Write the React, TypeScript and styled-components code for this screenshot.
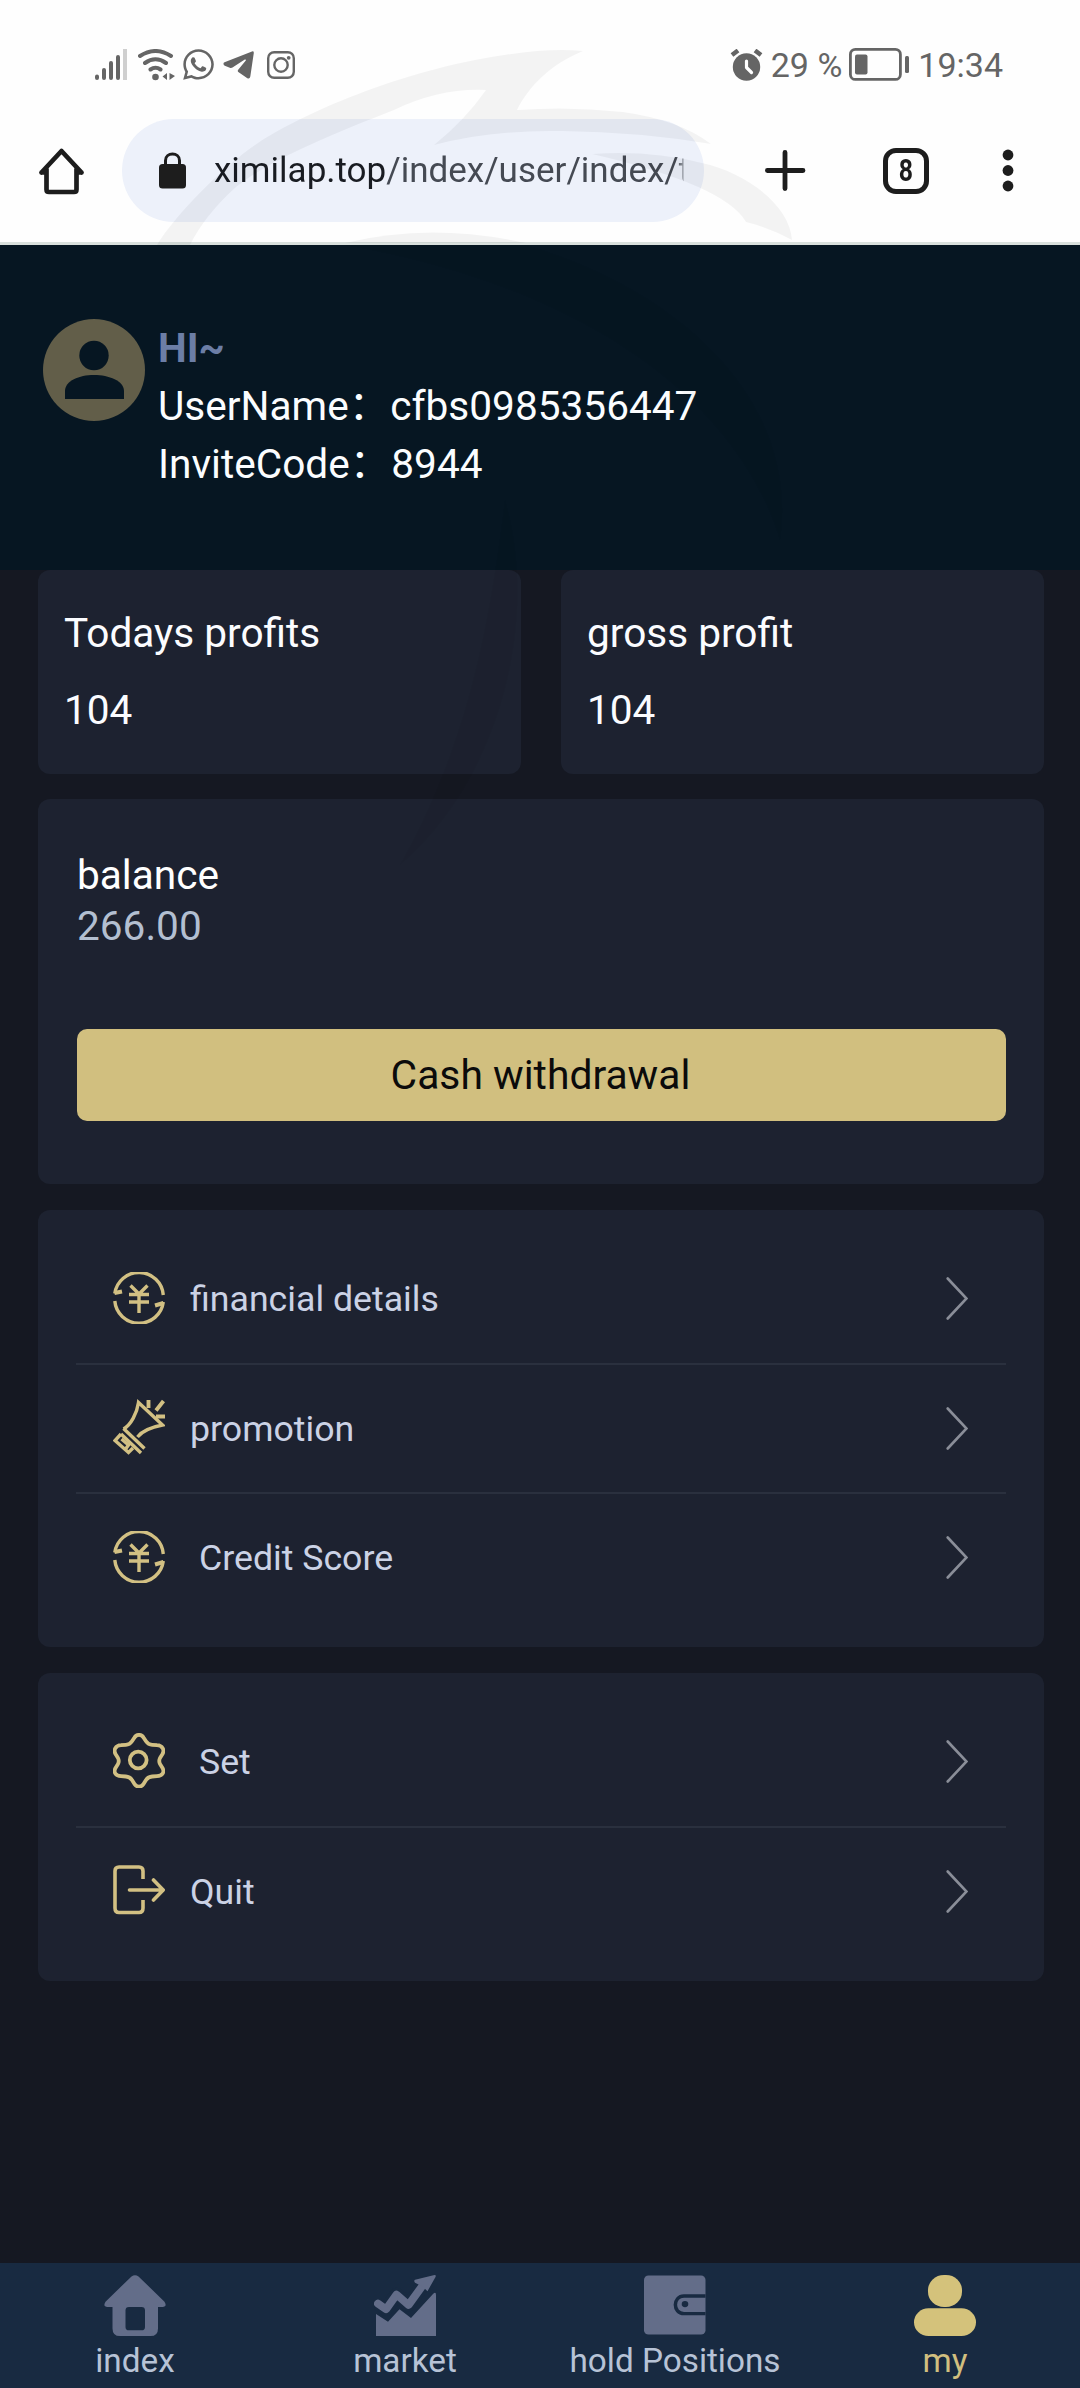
import React from "react";
import styled, { createGlobalStyle } from "styled-components";
import { FaWhatsapp } from "react-icons/fa";

const GlobalStyle = createGlobalStyle`
  * { box-sizing: border-box; }
  body {
    margin: 0;
    background: #151822;
    font-family: Roboto, "Noto Sans CJK SC", sans-serif;
  }
`;

const gold = "#d1bf7f";
const iconGold = "#d2c083";
const statusGrey = "#656565";
const ink = "#1d1d1d";
const navGrey = "#636d89";

const Screen = styled.div`
  position: relative;
  display: flex;
  flex-direction: column;
  width: 1080px;
  height: 2388px;
  overflow: hidden;
  background: #151822;
`;

const StatusBar = styled.div`
  display: flex;
  align-items: center;
  justify-content: space-between;
  height: 119px;
  padding: 10px 77px 0 95px;
  background: #fefefe;
  color: ${statusGrey};
`;

const StatusGroup = styled.div<{ $gap?: number }>`
  display: flex;
  align-items: center;
  gap: ${(p) => p.$gap ?? 0}px;
  svg { display: block; flex: none; }
`;

const StatusText = styled.span<{ $left: number; $right?: number }>`
  margin-left: ${(p) => p.$left}px;
  margin-right: ${(p) => p.$right ?? 0}px;
  font-size: 34px;
  line-height: 40px;
  white-space: pre;
`;

const BrowserBar = styled.div`
  display: flex;
  align-items: center;
  height: 126px;
  padding: 0 0 20px 37px;
  background: #fefefe;
  border-bottom: 3px solid #d9e0dd;
  svg { display: block; flex: none; }
`;

const UrlPill = styled.div`
  display: flex;
  align-items: center;
  width: 582px;
  height: 103px;
  margin: 0 61px 0 36px;
  padding-left: 37px;
  border-radius: 52px;
  background: #edf1fa;
`;

const UrlText = styled.div`
  width: 480px;
  margin: 1px 0 0 28px;
  color: #454a53;
  font-size: 35px;
  line-height: 48px;
  white-space: nowrap;
  mask-image: linear-gradient(to right, #000 462px, rgba(0, 0, 0, 0.5) 469px, transparent 470px);
  b { color: #191c22; font-weight: 400; }
`;

const TabCount = styled.div`
  display: flex;
  align-items: center;
  justify-content: center;
  width: 46px;
  height: 46px;
  margin: 0 73px 0 77px;
  border: 5px solid ${ink};
  border-radius: 13px;
  color: ${ink};
  font-size: 31px;
  font-weight: 700;
  span { transform: scaleX(0.8); }
`;

const Header = styled.header`
  display: flex;
  height: 325px;
  padding: 74px 43px 0;
  background: #061622;
`;

const Identity = styled.div`
  margin-left: 13px;
  color: #fbfdff;
  font-size: 40.6px;
  line-height: 58px;
`;

const Colon = styled.span`
  margin-right: 1px;
`;

const Greeting = styled.div`
  color: #6c7ea6;
  font-weight: 700;
`;

const Content = styled.main`
  display: flex;
  flex: 1;
  flex-direction: column;
  gap: 26px;
  padding: 0 36px 0 38px;
`;

const ProfitRow = styled.section`
  display: grid;
  grid-template-columns: 483px 483px;
  justify-content: space-between;
  margin-bottom: -1px;
`;

const Panel = styled.section`
  border-radius: 12px;
  background: #1d2230;
`;

const ProfitCard = styled(Panel)`
  height: 204px;
  padding: 25px 26px;
  color: #fbfcff;
  font-size: 40.6px;
  line-height: 77px;
`;

const BalanceCard = styled(Panel)`
  height: 385px;
  padding: 51px 38px 0 39px;
  color: #fff;
  font-size: 40.6px;
  line-height: 51px;
`;

const Amount = styled.div`
  color: #b3bfd1;
`;

const WithdrawButton = styled.button`
  display: block;
  width: 100%;
  height: 92px;
  margin-top: 77px;
  padding: 0 2px 0 0;
  border: 0;
  border-radius: 10px;
  background: ${gold};
  color: #0b0b0b;
  font: 400 40.8px/90px Roboto, sans-serif;
`;

const MenuCard = styled(Panel)`
  padding: 25px 38px 23.5px;
`;

const MenuItem = styled.div`
  display: flex;
  align-items: center;
  height: 129.5px;
  padding: 0 38px 0 37px;
  border-bottom: 2px solid #2a303e;
  color: #cbd2e5;
  font-size: 35.7px;
  line-height: 48px;
  &:last-child { border-bottom-color: transparent; }
  svg { display: block; flex: none; }
  svg:first-child { margin-bottom: 2px; }
`;

const MenuLabel = styled.span<{ $indent?: boolean }>`
  flex: 1;
  margin: 1px 0 0 ${(p) => (p.$indent ? 34 : 25)}px;
`;

const BottomNav = styled.nav`
  display: grid;
  grid-template-columns: repeat(4, 1fr);
  height: 125px;
  background: #182a41;
`;

const NavItem = styled.div<{ $active?: boolean }>`
  display: flex;
  flex-direction: column;
  align-items: center;
  padding-top: 12px;
  color: ${(p) => (p.$active ? gold : "#b7c3d6")};
  font-size: 33.3px;
  line-height: 46px;
  svg { display: block; margin-bottom: 2px; }
`;

const Watermark = styled.svg`
  position: absolute;
  top: 0;
  left: 0;
  pointer-events: none;
`;

const SignalIcon = () => (
  <svg width="33" height="32" viewBox="0 0 33 32" strokeLinecap="round" strokeWidth="4" stroke={statusGrey}>
    <path d="M2 27.500V29M9 21V29M16 14V29M23 8V29" />
    <path d="M30 0V31" stroke="#cfcfcf" strokeLinecap="butt" />
  </svg>
);

const WifiIcon = () => (
  <svg width="38" height="32" viewBox="0 0 38 32" fill="none" stroke={statusGrey} strokeWidth="4" strokeLinecap="round">
    <path d="M2 7Q17.500-3 33 7M7 14Q17.500 6.500 28 14M12.500 20.500Q17.500 17 22.500 20.500" />
    <circle cx="17.500" cy="28" r="3.300" fill={statusGrey} stroke="none" />
    <path d="M29 24V31L24.500 27.500ZM31.500 24V31L37 27Z" fill={statusGrey} stroke="none" />
  </svg>
);

const TelegramIcon = () => (
  <svg width="31" height="28" viewBox="0 0 31 28" fill={statusGrey}>
    <path d="M0.500 12.500Q0.500 11.800 1.500 11.300L29 .4Q31 0 30.800 2L27.300 25.500Q26.700 28.500 24 27L15.300 21Q14.300 20 15.200 18.800L22.800 9.500Q23.300 8 21.800 8.500L9.500 16.500Q8.300 17.200 6.800 16.700L1.800 14.800Q.3 14.100.5 12.500Z" />
  </svg>
);

const InstagramIcon = () => (
  <svg width="28" height="28" viewBox="0 0 28 28" fill="none" stroke={statusGrey} strokeWidth="2.400">
    <rect x="1.200" y="1.200" width="25.600" height="25.600" rx="6" />
    <circle cx="14" cy="14" r="6.700" />
    <circle cx="21.700" cy="6.800" r="1.900" fill={statusGrey} stroke="none" />
  </svg>
);

const AlarmIcon = () => (
  <svg width="33" height="32" viewBox="0 0 33 32" fill="none" strokeLinecap="round">
    <circle cx="16.500" cy="18" r="13.700" fill={statusGrey} />
    <path d="M16.500 12V18.500L21.500 23.500" stroke="#fff" strokeWidth="3.200" strokeLinejoin="round" />
    <path d="M2 6L8 1.500M25 1.500L31 6" stroke={statusGrey} strokeWidth="4.500" strokeLinecap="butt" />
  </svg>
);

const BatteryIcon = () => (
  <svg width="61" height="33" viewBox="0 0 61 33" fill={statusGrey}>
    <rect x="1.400" y="1.400" width="50" height="30" rx="5" fill="none" stroke={statusGrey} strokeWidth="2.800" />
    <rect x="6" y="6.500" width="12.500" height="20" rx="2" />
    <rect x="56" y="8" width="4" height="17" rx="1.500" />
  </svg>
);

const HomeIcon = () => (
  <svg width="49" height="52" viewBox="0 0 49 52" fill="none" stroke={ink} strokeWidth="4.700" strokeLinecap="round" strokeLinejoin="round">
    <path d="M4.500 27.500L24.500 6L44.500 27.500M9.500 24V44.500Q9.500 47 12 47H37Q39.500 47 39.500 44.500V24M4.500 27.500H9M40 27.500H44.500" />
  </svg>
);

const LockIcon = () => (
  <svg width="27" height="37" viewBox="0 0 27 37" fill="none">
    <rect x="0" y="12" width="27" height="24.500" rx="3.500" fill={ink} />
    <path d="M6.500 14V8.500C6.500 -.3 20.500 -.3 20.500 8.500V14" stroke={ink} strokeWidth="3" />
  </svg>
);

const PlusIcon = () => (
  <svg width="41" height="43" viewBox="0 0 41 43" stroke={ink} strokeWidth="4.800" strokeLinecap="round">
    <path d="M20 3.500V39.500M2.400 21.500H38" />
  </svg>
);

const DotsIcon = () => (
  <svg width="12" height="43" viewBox="0 0 12 43" fill={ink}>
    <circle cx="6" cy="6" r="5.400" />
    <circle cx="6" cy="21.500" r="5.400" />
    <circle cx="6" cy="37" r="5.400" />
  </svg>
);

const AvatarIcon = () => (
  <svg width="102" height="102" viewBox="0 0 102 102" display="block">
    <circle cx="51" cy="51" r="51" fill="#625e49" />
    <circle cx="51" cy="36.500" r="14.700" fill="#061622" />
    <path d="M22 80V72C22 62 36 56 51 56S81 62 81 72V80Z" fill="#061622" />
  </svg>
);

const YenIcon = () => (
  <svg width="52" height="52" viewBox="0 0 52 52" fill="none" stroke={iconGold} strokeWidth="3.400">
    <path d="M1.800 21.500A24.400 24.400 0 0 1 50.300 23M50.300 30A24.400 24.400 0 0 1 1.800 29" />
    <path d="M1.500 21L9 19.500M50.500 31L42 33.500" strokeWidth="4" />
    <path d="M17.500 13.500L26 22L34.500 13.500M16 22.500H36M16 30H36M26 22V41" strokeWidth="3.400" />
  </svg>
);

const PromotionIcon = () => (
  <svg width="52" height="56" viewBox="0 0 52 56" fill="none" stroke={iconGold} strokeWidth="3.400">
    <path d="M10.500 30C18 26 24 14 25.500 3.500L49.500 26C39 28 29 32 24.500 38" strokeLinejoin="miter" />
    <path d="M10.500 29.500L31.500 49.500M8 35L28 54" />
    <path d="M8 35L2 41.500L15.500 53.500L20 49M8.500 40L15.500 46L13 49.500" />
    <path d="M35.500 1V9M50.500 2L43 11.500M43 17.500H52" strokeWidth="3.900" />
  </svg>
);

const GearIcon = () => (
  <svg width="52" height="55" viewBox="0 0 52 55" fill="none" stroke={iconGold} strokeWidth="3.800" strokeLinejoin="round">
    <path d="M21.500 4.500C23.500 1 28.500 1 30.500 4.500L33 8.300C34.500 10.600 36.500 11.700 39.200 11.800L44 12.200C49.500 12.500 51.800 17 49.500 21L47 25C46 27 46 29 47 31L49.500 35C51.800 39 49.500 43 44 43.200L39.200 43.500C36.500 43.700 34.500 44.800 33 47L30.500 51C28.500 54.500 23.500 54.500 21.500 51L19 47C17.500 44.800 15.500 43.700 12.800 43.500L8 43.200C2.500 43 .2 39 2.500 35L5 31C6 29 6 27 5 25L2.500 21C.2 17 2.500 12.500 8 12.200L12.800 11.800C15.500 11.700 17.500 10.600 19 8.300Z" />
    <circle cx="25.200" cy="27" r="8.400" />
  </svg>
);

const QuitIcon = () => (
  <svg width="52" height="50" viewBox="0 0 52 50" fill="none" stroke={iconGold} strokeWidth="3.600" strokeLinecap="round" strokeLinejoin="round">
    <path d="M30 14V6Q30 2 26 2H6Q2 2 2 6V43Q2 47.500 6 47.500H26Q30 47.500 30 43V35" strokeLinecap="butt" />
    <path d="M16.500 25H50M40.500 15L50.200 25L40.500 35" />
  </svg>
);

const Chevron = () => (
  <svg width="22" height="43" viewBox="0 0 22 43" fill="none" stroke="#8a8e98" strokeWidth="2.600" strokeLinecap="round">
    <path d="M1.700 1.500L20.500 21.500L1.700 41.500" />
  </svg>
);

const NavHomeIcon = () => (
  <svg width="62" height="61" viewBox="0 0 62 64" preserveAspectRatio="none" fill={navGrey} fillRule="evenodd">
    <path d="M27.500 1.500Q31 -1 34.500 1.500L60.500 28Q63.500 33 58.500 33.500H54V56Q54 64 46.500 64H16Q8.500 64 8.500 56V33.500H3.500Q-1.500 33 1.500 28ZM25 33.500Q21.500 33.500 21.500 37V54.500Q21.500 58 25 58H37.500Q41 58 41 54.500V37Q41 33.500 37.500 33.500Z" />
  </svg>
);

const NavMarketIcon = () => (
  <svg width="62" height="61" viewBox="0 0 62 64" preserveAspectRatio="none" fill={navGrey}>
    <path d="M2 41L14 49L25.500 36L37 45L59 20Q62 17 62 21V64H2Z" />
    <path d="M4 30L12 36L22.500 20.500L34.500 31.500L48 12" fill="none" stroke="#182a41" strokeWidth="14" strokeLinejoin="round" />
    <path d="M4 30L12 36L22.500 20.500L34.500 31.500L48 12" fill="none" stroke={navGrey} strokeWidth="8" strokeLinecap="round" strokeLinejoin="round" />
    <path d="M41 5L60.500 0Q62.500 0 61.500 2L53.500 17L48.500 12L41 8Q39.500 6 41 5Z" />
  </svg>
);

const NavWalletIcon = () => (
  <svg width="62" height="61" viewBox="0 0 62 64" preserveAspectRatio="none">
    <rect x="0" y="0.500" width="61.500" height="62" rx="4.500" fill={navGrey} />
    <path d="M61.500 22H40C28.500 22 28.500 40.500 40 40.500H61.500" fill="none" stroke="#182a41" strokeWidth="3.500" />
    <circle cx="41" cy="30.500" r="3.300" fill="#182a41" />
  </svg>
);

const NavUserIcon = () => (
  <svg width="62" height="61" viewBox="0 0 62 64" preserveAspectRatio="none" fill="#d4c27b">
    <rect x="14" y="0" width="34" height="33.500" rx="16" />
    <rect x="0" y="35" width="62" height="29" rx="14.500" />
  </svg>
);

type Entry = { label: string; icon: React.ReactNode; indent?: boolean };

const accountMenu: Entry[] = [
  { label: "financial details", icon: <YenIcon /> },
  { label: "promotion", icon: <PromotionIcon /> },
  { label: "Credit Score", icon: <YenIcon />, indent: true },
];

const systemMenu: Entry[] = [
  { label: "Set", icon: <GearIcon />, indent: true },
  { label: "Quit", icon: <QuitIcon /> },
];

const Menu = ({ items }: { items: Entry[] }) => (
  <MenuCard>
    {items.map((item) => (
      <MenuItem key={item.label}>
        {item.icon}
        <MenuLabel $indent={item.indent}>{item.label}</MenuLabel>
        <Chevron />
      </MenuItem>
    ))}
  </MenuCard>
);

export default function App() {
  return (
    <Screen>
      <GlobalStyle />
      <StatusBar>
        <StatusGroup $gap={10}>
          <SignalIcon />
          <StatusGroup $gap={7}>
            <StatusGroup $gap={5}>
              <WifiIcon />
              <FaWhatsapp size={35} />
            </StatusGroup>
            <StatusGroup $gap={13}>
              <TelegramIcon />
              <InstagramIcon />
            </StatusGroup>
          </StatusGroup>
        </StatusGroup>
        <StatusGroup>
          <AlarmIcon />
          <StatusText $left={8} $right={7}>29 %</StatusText>
          <BatteryIcon />
          <StatusText $left={8}>19:34</StatusText>
        </StatusGroup>
      </StatusBar>

      <BrowserBar>
        <HomeIcon />
        <UrlPill>
          <LockIcon />
          <UrlText><b>ximilap.top</b>/index/user/index/t</UrlText>
        </UrlPill>
        <PlusIcon />
        <TabCount><span>8</span></TabCount>
        <DotsIcon />
      </BrowserBar>

      <Header>
        <AvatarIcon />
        <Identity>
          <Greeting>HI~</Greeting>
          <div>UserName<Colon>：</Colon>cfbs0985356447</div>
          <div>InviteCode<Colon>：</Colon>8944</div>
        </Identity>
      </Header>

      <Content>
        <ProfitRow>
          <ProfitCard>
            <div>Todays profits</div>
            <div>104</div>
          </ProfitCard>
          <ProfitCard>
            <div>gross profit</div>
            <div>104</div>
          </ProfitCard>
        </ProfitRow>
        <BalanceCard>
          <div>balance</div>
          <Amount>266.00</Amount>
          <WithdrawButton>Cash withdrawal</WithdrawButton>
        </BalanceCard>
        <Menu items={accountMenu} />
        <Menu items={systemMenu} />
      </Content>

      <BottomNav>
        <NavItem><NavHomeIcon />index</NavItem>
        <NavItem><NavMarketIcon />market</NavItem>
        <NavItem><NavWalletIcon />hold Positions</NavItem>
        <NavItem $active><NavUserIcon />my</NavItem>
      </BottomNav>

      <Watermark width="1080" height="900" viewBox="0 0 1080 900" fill="#000">
        <g fillOpacity="0.042">
          <path d="M157 245C175 215 225 165 258 143C300 115 400 70 504 55Q550 48 583 51C550 65 530 85 517 110Q570 106 623 112Q680 120 711 144Q640 132 561 131Q490 130 434 145Q465 120 486 90Q440 88 394 110C330 135 270 160 236 187Q205 215 190 245Z" />
          <path d="M592 154Q650 150 702 163C745 172 790 205 792 240Q770 228 746 222Q725 185 592 154Z" />
          <path d="M345 243Q430 222 526 243Z" />
        </g>
        <g fillOpacity="0.03">
          <path d="M345 245H526C680 290 800 400 780 540C740 410 600 290 345 245Z" />
          <path d="M505 500C540 620 500 780 400 865C470 740 490 620 505 500Z" />
        </g>
      </Watermark>
    </Screen>
  );
}
